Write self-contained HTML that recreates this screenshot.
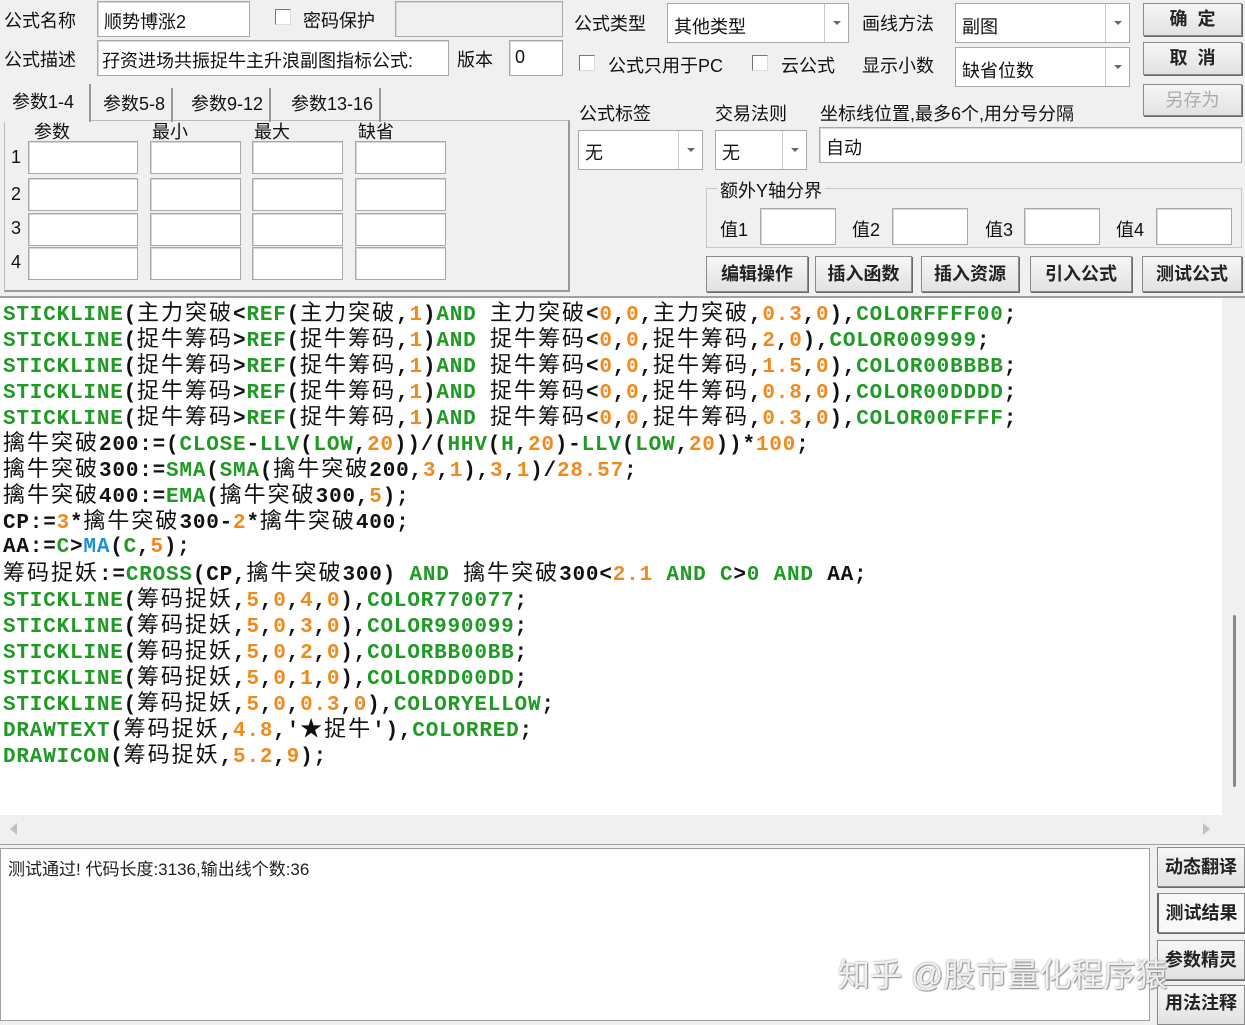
<!DOCTYPE html>
<html><head><meta charset="utf-8"><style>
*{box-sizing:border-box;margin:0;padding:0}
body{width:1245px;height:1021px;background:#f0f0f0;position:relative;overflow:hidden;font-family:"Liberation Sans","Noto Sans CJK SC",sans-serif;font-size:18px;color:#111}
.a{position:absolute;white-space:nowrap}
.in{position:absolute;background:#fff;border:1px solid #a8a8a8;box-shadow:inset 1px 1px 0 #d8d8d8}
.dd{position:absolute;background:#fff;border:1px solid #a8a8a8}
.dd .ar{position:absolute;right:0;top:0;bottom:0;width:24px;border-left:1px solid #c8c8c8}
.dd .ar:after{content:"";position:absolute;left:8px;top:50%;margin-top:-2px;border-left:4px solid transparent;border-right:4px solid transparent;border-top:4px solid #666}
.btn{position:absolute;background:linear-gradient(#f6f6f6,#e2e2e2);border:1px solid #8a8a8a;box-shadow:1px 1px 0 #6a6a6a;text-align:center;font-weight:bold;color:#222}
.cb{position:absolute;width:16px;height:16px;background:#fff;border:1px solid #777;border-right-color:#ddd;border-bottom-color:#ddd}
#code{position:absolute;left:0;top:298px;width:1222px;height:517px;background:#fff;font-family:"Liberation Mono","Noto Sans CJK SC",monospace;font-weight:bold;font-size:21px;letter-spacing:0.8px;padding:3px 0 0 3px;white-space:pre;color:#111;overflow:hidden}
#code div{height:26px;line-height:26px;overflow:visible}
#code .c{font-weight:normal;letter-spacing:2px;font-family:"Noto Sans CJK SC",sans-serif;font-size:22px;line-height:20px}
.g{color:#1f9a25}.o{color:#f08a1c}.b{color:#1e8fd0}
</style></head><body>
<div class="a" style="left:4px;top:7px">公式名称</div>
<div class="in" style="left:97px;top:1px;width:153px;height:36px"><span class="a" style="left:6px;top:6px">顺势博涨2</span></div>
<div class="cb" style="left:275px;top:9px"></div>
<div class="a" style="left:303px;top:7px">密码保护</div>
<div class="in" style="left:395px;top:1px;width:168px;height:36px;background:#f0f0f0"></div>
<div class="a" style="left:4px;top:46px">公式描述</div>
<div class="in" style="left:97px;top:40px;width:352px;height:36px"><span class="a" style="left:4px;top:6px">孖资进场共振捉牛主升浪副图指标公式:</span></div>
<div class="a" style="left:457px;top:46px">版本</div>
<div class="in" style="left:509px;top:40px;width:54px;height:36px"><span class="a" style="left:5px;top:6px">0</span></div>
<div style="position:absolute;left:4px;top:120px;width:566px;height:172px;border:1px solid #bbb;border-right:2px solid #999;border-bottom:2px solid #999"></div>
<div class="a" style="left:3px;top:84px;width:88px;height:38px;background:#f0f0f0;border-right:2px solid #999"></div>
<div class="a" style="left:12px;top:88px">参数1-4</div>
<div class="a" style="left:95px;top:88px;border-right:2px solid #999;padding:2px 6px 6px 8px">参数5-8</div>
<div class="a" style="left:183px;top:88px;border-right:2px solid #999;padding:2px 6px 6px 8px">参数9-12</div>
<div class="a" style="left:283px;top:88px;border-right:2px solid #999;padding:2px 6px 6px 8px">参数13-16</div>
<div class="a" style="left:34px;top:118px">参数</div>
<div class="a" style="left:152px;top:118px">最小</div>
<div class="a" style="left:254px;top:118px">最大</div>
<div class="a" style="left:358px;top:118px">缺省</div>
<div class="a" style="left:11px;top:147px">1</div><div class="a" style="left:11px;top:184px">2</div><div class="a" style="left:11px;top:218px">3</div><div class="a" style="left:11px;top:252px">4</div>
<div class="in" style="left:28px;top:141px;width:110px;height:33px"></div><div class="in" style="left:150px;top:141px;width:91px;height:33px"></div><div class="in" style="left:252px;top:141px;width:91px;height:33px"></div><div class="in" style="left:355px;top:141px;width:91px;height:33px"></div>
<div class="in" style="left:28px;top:178px;width:110px;height:33px"></div><div class="in" style="left:150px;top:178px;width:91px;height:33px"></div><div class="in" style="left:252px;top:178px;width:91px;height:33px"></div><div class="in" style="left:355px;top:178px;width:91px;height:33px"></div>
<div class="in" style="left:28px;top:213px;width:110px;height:33px"></div><div class="in" style="left:150px;top:213px;width:91px;height:33px"></div><div class="in" style="left:252px;top:213px;width:91px;height:33px"></div><div class="in" style="left:355px;top:213px;width:91px;height:33px"></div>
<div class="in" style="left:28px;top:247px;width:110px;height:33px"></div><div class="in" style="left:150px;top:247px;width:91px;height:33px"></div><div class="in" style="left:252px;top:247px;width:91px;height:33px"></div><div class="in" style="left:355px;top:247px;width:91px;height:33px"></div>
<div class="a" style="left:574px;top:10px">公式类型</div>
<div class="dd" style="left:667px;top:3px;width:182px;height:40px"><span class="a" style="left:6px;top:9px">其他类型</span><div class="ar"></div></div>
<div class="a" style="left:862px;top:10px">画线方法</div>
<div class="dd" style="left:955px;top:3px;width:175px;height:40px"><span class="a" style="left:6px;top:9px">副图</span><div class="ar"></div></div>
<div class="btn" style="left:1143px;top:3px;width:99px;height:33px;line-height:31px">确&nbsp;&nbsp;定</div>
<div class="cb" style="left:579px;top:55px"></div>
<div class="a" style="left:608px;top:52px">公式只用于PC</div>
<div class="cb" style="left:752px;top:55px"></div>
<div class="a" style="left:781px;top:52px">云公式</div>
<div class="a" style="left:862px;top:52px">显示小数</div>
<div class="dd" style="left:955px;top:47px;width:175px;height:40px"><span class="a" style="left:6px;top:9px">缺省位数</span><div class="ar"></div></div>
<div class="btn" style="left:1143px;top:42px;width:99px;height:33px;line-height:31px">取&nbsp;&nbsp;消</div>
<div class="btn" style="left:1143px;top:84px;width:99px;height:32px;line-height:30px;color:#aaa;font-weight:normal">另存为</div>
<div class="a" style="left:579px;top:100px">公式标签</div>
<div class="a" style="left:715px;top:100px">交易法则</div>
<div class="a" style="left:820px;top:100px">坐标线位置,最多6个,用分号分隔</div>
<div class="dd" style="left:578px;top:130px;width:125px;height:40px"><span class="a" style="left:6px;top:8px">无</span><div class="ar"></div></div>
<div class="dd" style="left:715px;top:130px;width:92px;height:40px"><span class="a" style="left:6px;top:8px">无</span><div class="ar"></div></div>
<div class="in" style="left:819px;top:127px;width:423px;height:36px"><span class="a" style="left:6px;top:6px">自动</span></div>
<div style="position:absolute;left:706px;top:188px;width:536px;height:60px;border:1px solid #c8c8c8"></div>
<div class="a" style="left:717px;top:177px;background:#f0f0f0;padding:0 3px">额外Y轴分界</div>
<div class="a" style="left:720px;top:216px">值1</div><div class="in" style="left:760px;top:208px;width:76px;height:37px"></div>
<div class="a" style="left:852px;top:216px">值2</div><div class="in" style="left:892px;top:208px;width:76px;height:37px"></div>
<div class="a" style="left:985px;top:216px">值3</div><div class="in" style="left:1024px;top:208px;width:76px;height:37px"></div>
<div class="a" style="left:1116px;top:216px">值4</div><div class="in" style="left:1156px;top:208px;width:76px;height:37px"></div>
<div class="btn" style="left:706px;top:256px;width:102px;height:36px;line-height:34px">编辑操作</div>
<div class="btn" style="left:815px;top:256px;width:97px;height:36px;line-height:34px">插入函数</div>
<div class="btn" style="left:921px;top:256px;width:98px;height:36px;line-height:34px">插入资源</div>
<div class="btn" style="left:1030px;top:256px;width:102px;height:36px;line-height:34px">引入公式</div>
<div class="btn" style="left:1142px;top:256px;width:100px;height:36px;line-height:34px">测试公式</div>
<div style="position:absolute;left:0;top:296px;width:1245px;height:2px;background:#a0a0a0"></div>
<div id="code"><div><span class="g">STICKLINE</span>(<span class="c">主力突破</span>&lt;<span class="g">REF</span>(<span class="c">主力突破</span>,<span class="o">1</span>)<span class="g">AND</span> <span class="c">主力突破</span>&lt;<span class="o">0</span>,<span class="o">0</span>,<span class="c">主力突破</span>,<span class="o">0.3</span>,<span class="o">0</span>),<span class="g">COLORFFFF00</span>;</div><div><span class="g">STICKLINE</span>(<span class="c">捉牛筹码</span>&gt;<span class="g">REF</span>(<span class="c">捉牛筹码</span>,<span class="o">1</span>)<span class="g">AND</span> <span class="c">捉牛筹码</span>&lt;<span class="o">0</span>,<span class="o">0</span>,<span class="c">捉牛筹码</span>,<span class="o">2</span>,<span class="o">0</span>),<span class="g">COLOR009999</span>;</div><div><span class="g">STICKLINE</span>(<span class="c">捉牛筹码</span>&gt;<span class="g">REF</span>(<span class="c">捉牛筹码</span>,<span class="o">1</span>)<span class="g">AND</span> <span class="c">捉牛筹码</span>&lt;<span class="o">0</span>,<span class="o">0</span>,<span class="c">捉牛筹码</span>,<span class="o">1.5</span>,<span class="o">0</span>),<span class="g">COLOR00BBBB</span>;</div><div><span class="g">STICKLINE</span>(<span class="c">捉牛筹码</span>&gt;<span class="g">REF</span>(<span class="c">捉牛筹码</span>,<span class="o">1</span>)<span class="g">AND</span> <span class="c">捉牛筹码</span>&lt;<span class="o">0</span>,<span class="o">0</span>,<span class="c">捉牛筹码</span>,<span class="o">0.8</span>,<span class="o">0</span>),<span class="g">COLOR00DDDD</span>;</div><div><span class="g">STICKLINE</span>(<span class="c">捉牛筹码</span>&gt;<span class="g">REF</span>(<span class="c">捉牛筹码</span>,<span class="o">1</span>)<span class="g">AND</span> <span class="c">捉牛筹码</span>&lt;<span class="o">0</span>,<span class="o">0</span>,<span class="c">捉牛筹码</span>,<span class="o">0.3</span>,<span class="o">0</span>),<span class="g">COLOR00FFFF</span>;</div><div><span class="c">擒牛突破</span>200:=(<span class="g">CLOSE</span>-<span class="g">LLV</span>(<span class="g">LOW</span>,<span class="o">20</span>))/(<span class="g">HHV</span>(<span class="g">H</span>,<span class="o">20</span>)-<span class="g">LLV</span>(<span class="g">LOW</span>,<span class="o">20</span>))*<span class="o">100</span>;</div><div><span class="c">擒牛突破</span>300:=<span class="g">SMA</span>(<span class="g">SMA</span>(<span class="c">擒牛突破</span>200,<span class="o">3</span>,<span class="o">1</span>),<span class="o">3</span>,<span class="o">1</span>)/<span class="o">28.57</span>;</div><div><span class="c">擒牛突破</span>400:=<span class="g">EMA</span>(<span class="c">擒牛突破</span>300,<span class="o">5</span>);</div><div>CP:=<span class="o">3</span>*<span class="c">擒牛突破</span>300-<span class="o">2</span>*<span class="c">擒牛突破</span>400;</div><div>AA:=<span class="g">C</span>&gt;<span class="b">MA</span>(<span class="g">C</span>,<span class="o">5</span>);</div><div><span class="c">筹码捉妖</span>:=<span class="g">CROSS</span>(CP,<span class="c">擒牛突破</span>300) <span class="g">AND</span> <span class="c">擒牛突破</span>300&lt;<span class="o">2.1</span> <span class="g">AND</span> <span class="g">C</span>&gt;<span class="g">0</span> <span class="g">AND</span> AA;</div><div><span class="g">STICKLINE</span>(<span class="c">筹码捉妖</span>,<span class="o">5</span>,<span class="o">0</span>,<span class="o">4</span>,<span class="o">0</span>),<span class="g">COLOR770077</span>;</div><div><span class="g">STICKLINE</span>(<span class="c">筹码捉妖</span>,<span class="o">5</span>,<span class="o">0</span>,<span class="o">3</span>,<span class="o">0</span>),<span class="g">COLOR990099</span>;</div><div><span class="g">STICKLINE</span>(<span class="c">筹码捉妖</span>,<span class="o">5</span>,<span class="o">0</span>,<span class="o">2</span>,<span class="o">0</span>),<span class="g">COLORBB00BB</span>;</div><div><span class="g">STICKLINE</span>(<span class="c">筹码捉妖</span>,<span class="o">5</span>,<span class="o">0</span>,<span class="o">1</span>,<span class="o">0</span>),<span class="g">COLORDD00DD</span>;</div><div><span class="g">STICKLINE</span>(<span class="c">筹码捉妖</span>,<span class="o">5</span>,<span class="o">0</span>,<span class="o">0.3</span>,<span class="o">0</span>),<span class="g">COLORYELLOW</span>;</div><div><span class="g">DRAWTEXT</span>(<span class="c">筹码捉妖</span>,<span class="o">4.8</span>,'<span class="c">★捉牛</span>'),<span class="g">COLORRED</span>;</div><div><span class="g">DRAWICON</span>(<span class="c">筹码捉妖</span>,<span class="o">5.2</span>,<span class="o">9</span>);</div></div>
<div style="position:absolute;left:1222px;top:298px;width:23px;height:517px;background:#f0f0f0"></div>
<div style="position:absolute;left:1233px;top:615px;width:3px;height:172px;background:#8a8a8a;border-radius:2px"></div>
<div style="position:absolute;left:0;top:815px;width:1245px;height:30px;background:#f0f0f0;border-bottom:1px solid #a0a0a0"></div>
<div class="a" style="left:10px;top:823px;border-right:7px solid #c0c0c0;border-top:6px solid transparent;border-bottom:6px solid transparent"></div>
<div class="a" style="left:1203px;top:823px;border-left:7px solid #c0c0c0;border-top:6px solid transparent;border-bottom:6px solid transparent"></div>
<div style="position:absolute;left:0;top:848px;width:1150px;height:173px;background:#fff;border:1px solid #a0a0a0"></div>
<div class="a" style="left:8px;top:855px;font-size:17px;color:#222">测试通过! 代码长度:3136,输出线个数:36</div>
<div class="btn" style="left:1157px;top:847px;width:88px;height:40px;line-height:38px">动态翻译</div>
<div class="btn" style="left:1157px;top:893px;width:88px;height:40px;line-height:38px;background:#f8f8f8;border-left:2px solid #666">测试结果</div>
<div class="btn" style="left:1157px;top:940px;width:88px;height:40px;line-height:38px">参数精灵</div>
<div class="btn" style="left:1157px;top:985px;width:88px;height:40px;line-height:34px">用法注释</div>
<div class="a" style="left:838px;top:950px;font-size:32px;color:rgba(255,255,255,0.85);text-shadow:0 0 2px #888,1px 1px 1px #999">知乎 @股市量化程序猿</div>
</body></html>
